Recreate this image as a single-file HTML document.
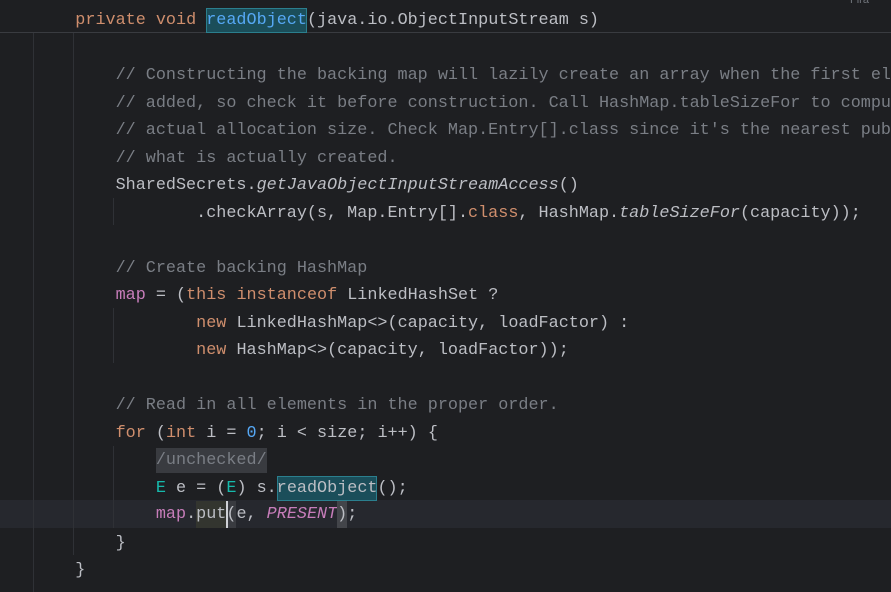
<!DOCTYPE html>
<html><head><meta charset="utf-8"><style>
html,body{margin:0;padding:0;background:#1e1f22;width:891px;height:592px;overflow:hidden}
.w{position:relative;width:891px;height:592px;font-family:"Liberation Mono",monospace;font-size:16.8px;color:#bcbec4}
.l{position:absolute;left:35px;height:27.5px;line-height:27.5px;white-space:pre}
.k{color:#cf8e6d}.m{color:#56a8f5}.c{color:#7a7e85}.f{color:#c77dba}.t{color:#16baac}.i{font-style:italic}
.fi{color:#c77dba;font-style:italic}
.g{position:absolute;width:1px;background:#2f3136}
.hl{background:#1b4e5a;outline:1px solid #2b7f8e;outline-offset:-1px;padding:3px 0}
</style></head><body><div class="w">
<div style="position:absolute;left:0;top:0;width:891px;height:32px;background:#1e1f22;border-bottom:1px solid #393b40"></div>
<div style="position:absolute;left:0;top:500px;width:891px;height:28px;background:#26282e"></div>
<div class="g" style="left:33px;top:33px;height:559px"></div>
<div class="g" style="left:73px;top:33px;height:522px"></div>
<div class="g" style="left:113px;top:198px;height:27px"></div>
<div class="g" style="left:113px;top:308px;height:55px"></div>
<div class="g" style="left:113px;top:446px;height:82px"></div>

<div class="l" style="top:7px">    <span class="k">private void </span><span class="m hl">readObject</span>(java.io.ObjectInputStream s)</div>
<div class="l c" style="top:62px">        // Constructing the backing map will lazily create an array when the first ele</div>
<div class="l c" style="top:89.5px">        // added, so check it before construction. Call HashMap.tableSizeFor to comput</div>
<div class="l c" style="top:117px">        // actual allocation size. Check Map.Entry[].class since it's the nearest publ</div>
<div class="l c" style="top:144.5px">        // what is actually created.</div>
<div class="l" style="top:172px">        SharedSecrets.<span class="i">getJavaObjectInputStreamAccess</span>()</div>
<div class="l" style="top:199.5px">                .checkArray(s, Map.Entry[].<span class="k">class</span>, HashMap.<span class="i">tableSizeFor</span>(capacity));</div>
<div class="l c" style="top:254.5px">        // Create backing HashMap</div>
<div class="l" style="top:282px">        <span class="f">map</span> = (<span class="k">this instanceof </span>LinkedHashSet ?</div>
<div class="l" style="top:309.5px">                <span class="k">new </span>LinkedHashMap&lt;&gt;(capacity, loadFactor) :</div>
<div class="l" style="top:337px">                <span class="k">new </span>HashMap&lt;&gt;(capacity, loadFactor));</div>
<div class="l c" style="top:392px">        // Read in all elements in the proper order.</div>
<div class="l" style="top:419.5px">        <span class="k">for </span>(<span class="k">int </span>i = <span class="m">0</span>; i &lt; size; i++) {</div>
<div class="l c" style="top:447px">            <span style="background:#393b40;padding:3px 0">/unchecked/</span></div>
<div class="l" style="top:474.5px">            <span class="t">E</span> e = (<span class="t">E</span>) s.<span class="hl">readObject</span>();</div>
<div class="l" style="top:501px">            <span class="f">map</span>.<span style="background:#33352f;padding:4px 0">put</span><span style="background:#393b40;box-shadow:inset 2px 0 0 #cfd1d6;padding:4px 0">(</span>e, <span class="fi">PRESENT</span><span style="background:#43454a;padding:4px 0">)</span>;</div>
<div class="l" style="top:529.5px">        }</div>
<div class="l" style="top:557px">    }</div>
<div style="position:absolute;left:850px;top:-6px;font-family:'Liberation Sans',sans-serif;font-size:11px;color:#6f737a">Fira</div>
</div></body></html>
